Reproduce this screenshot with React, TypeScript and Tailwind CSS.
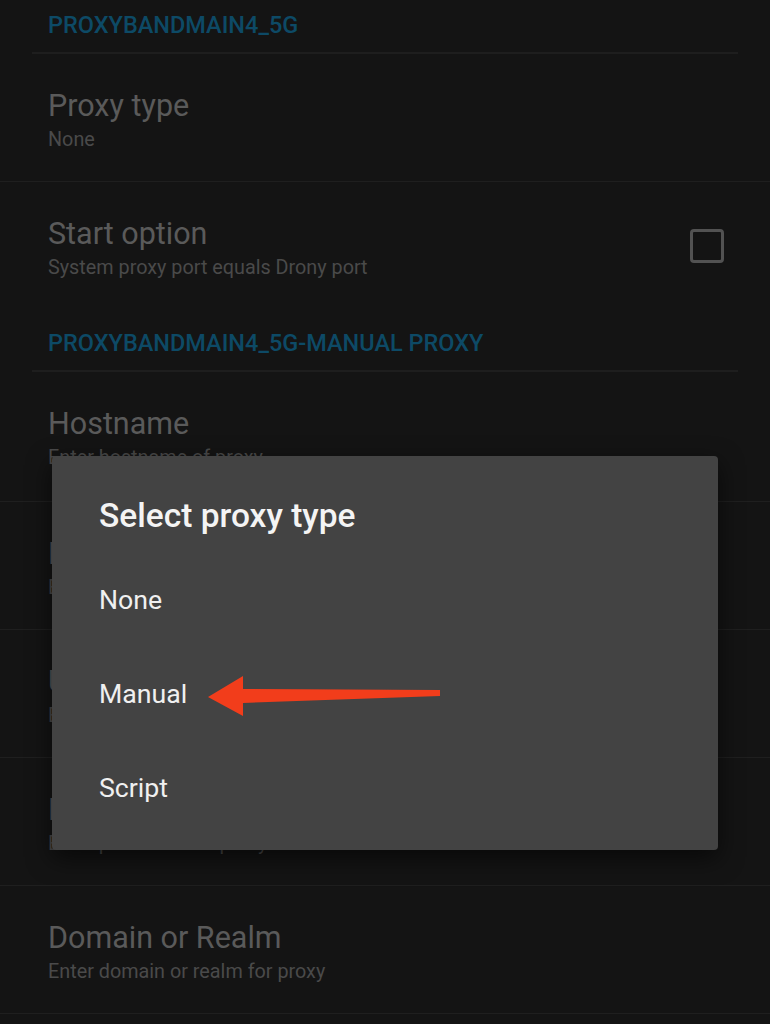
const rows = [
  { title: "Hostname", sub: "Enter hostname of proxy", tall: true },
  { title: "Port", sub: "Enter port of proxy" },
  { title: "Username", sub: "Enter username for proxy" },
  { title: "Password", sub: "Enter password for proxy" },
  { title: "Domain or Realm", sub: "Enter domain or realm for proxy" },
];

function SectionHeader({ label }: { label: string }) {
  return (
    <div className="flex h-[62px] flex-col">
      <div className="pl-12 pt-[19px] text-[23.5px] font-medium leading-[28px] text-[#0d4a66]">{label}</div>
      <div className="mx-8 mt-auto h-[2px] bg-[#1e1e1e]" />
    </div>
  );
}

function Row({ title, sub, last, tall, children }: { title: string; sub: string; last?: boolean; tall?: boolean; children?: React.ReactNode }) {
  return (
    <div className={"flex items-center pl-12 pr-[46px] " + (tall ? "h-[130px] " : "h-[128px] ") + (last ? "" : "border-b border-[#1f1f1f]")}>
      <div className="flex-1 self-start pt-[34px]">
        <div className="text-[30.5px] leading-[36px] text-[#5a5a5a]">{title}</div>
        <div className="mt-[4px] text-[19.8px] leading-[24px] text-[#4a4a4a]">{sub}</div>
      </div>
      {children}
    </div>
  );
}

export default function App() {
  const options = ["None", "Manual", "Script"];

  return (
    <div className="relative h-[1024px] w-[770px] overflow-hidden bg-[#141414]" style={{ fontFamily: "Roboto, 'Noto Sans', sans-serif" }}>
      <div className="-mt-[8px]">
        <SectionHeader label="PROXYBANDMAIN4_5G" />
        <Row title="Proxy type" sub="None" />
        <Row title="Start option" sub="System proxy port equals Drony port" last>
          <div className="h-[34px] w-[34px] rounded-[4px] border-[3px] border-[#525252]" />
        </Row>
        <SectionHeader label="PROXYBANDMAIN4_5G-MANUAL PROXY" />
        {rows.map(r => (
          <Row key={r.title} title={r.title} sub={r.sub} tall={r.tall} />
        ))}
      </div>

      {/* dialog */}
      <div className="absolute left-[52px] top-[456px] h-[394px] w-[666px] rounded-[4px] bg-[#434343] shadow-[0_8px_24px_rgba(0,0,0,0.6)]">
        <div className="h-[97px] pl-[47px] pt-[40px] text-[33.5px] font-medium leading-[40px] text-[#f4f4f4]">Select proxy type</div>
        <ul>
          {options.map(o => (
            <li key={o} className="flex h-[94px] items-center pl-[47px] text-[26.7px] text-[#f0f0f0]">{o}</li>
          ))}
        </ul>
      </div>

      <svg className="absolute left-0 top-0" width="770" height="1024" viewBox="0 0 770 1024">
        <polygon
          points="208,697 243,676 243,689 440,690 440,696 243,703 243,716"
          fill="#f23d1b"
        />
      </svg>
    </div>
  );
}
